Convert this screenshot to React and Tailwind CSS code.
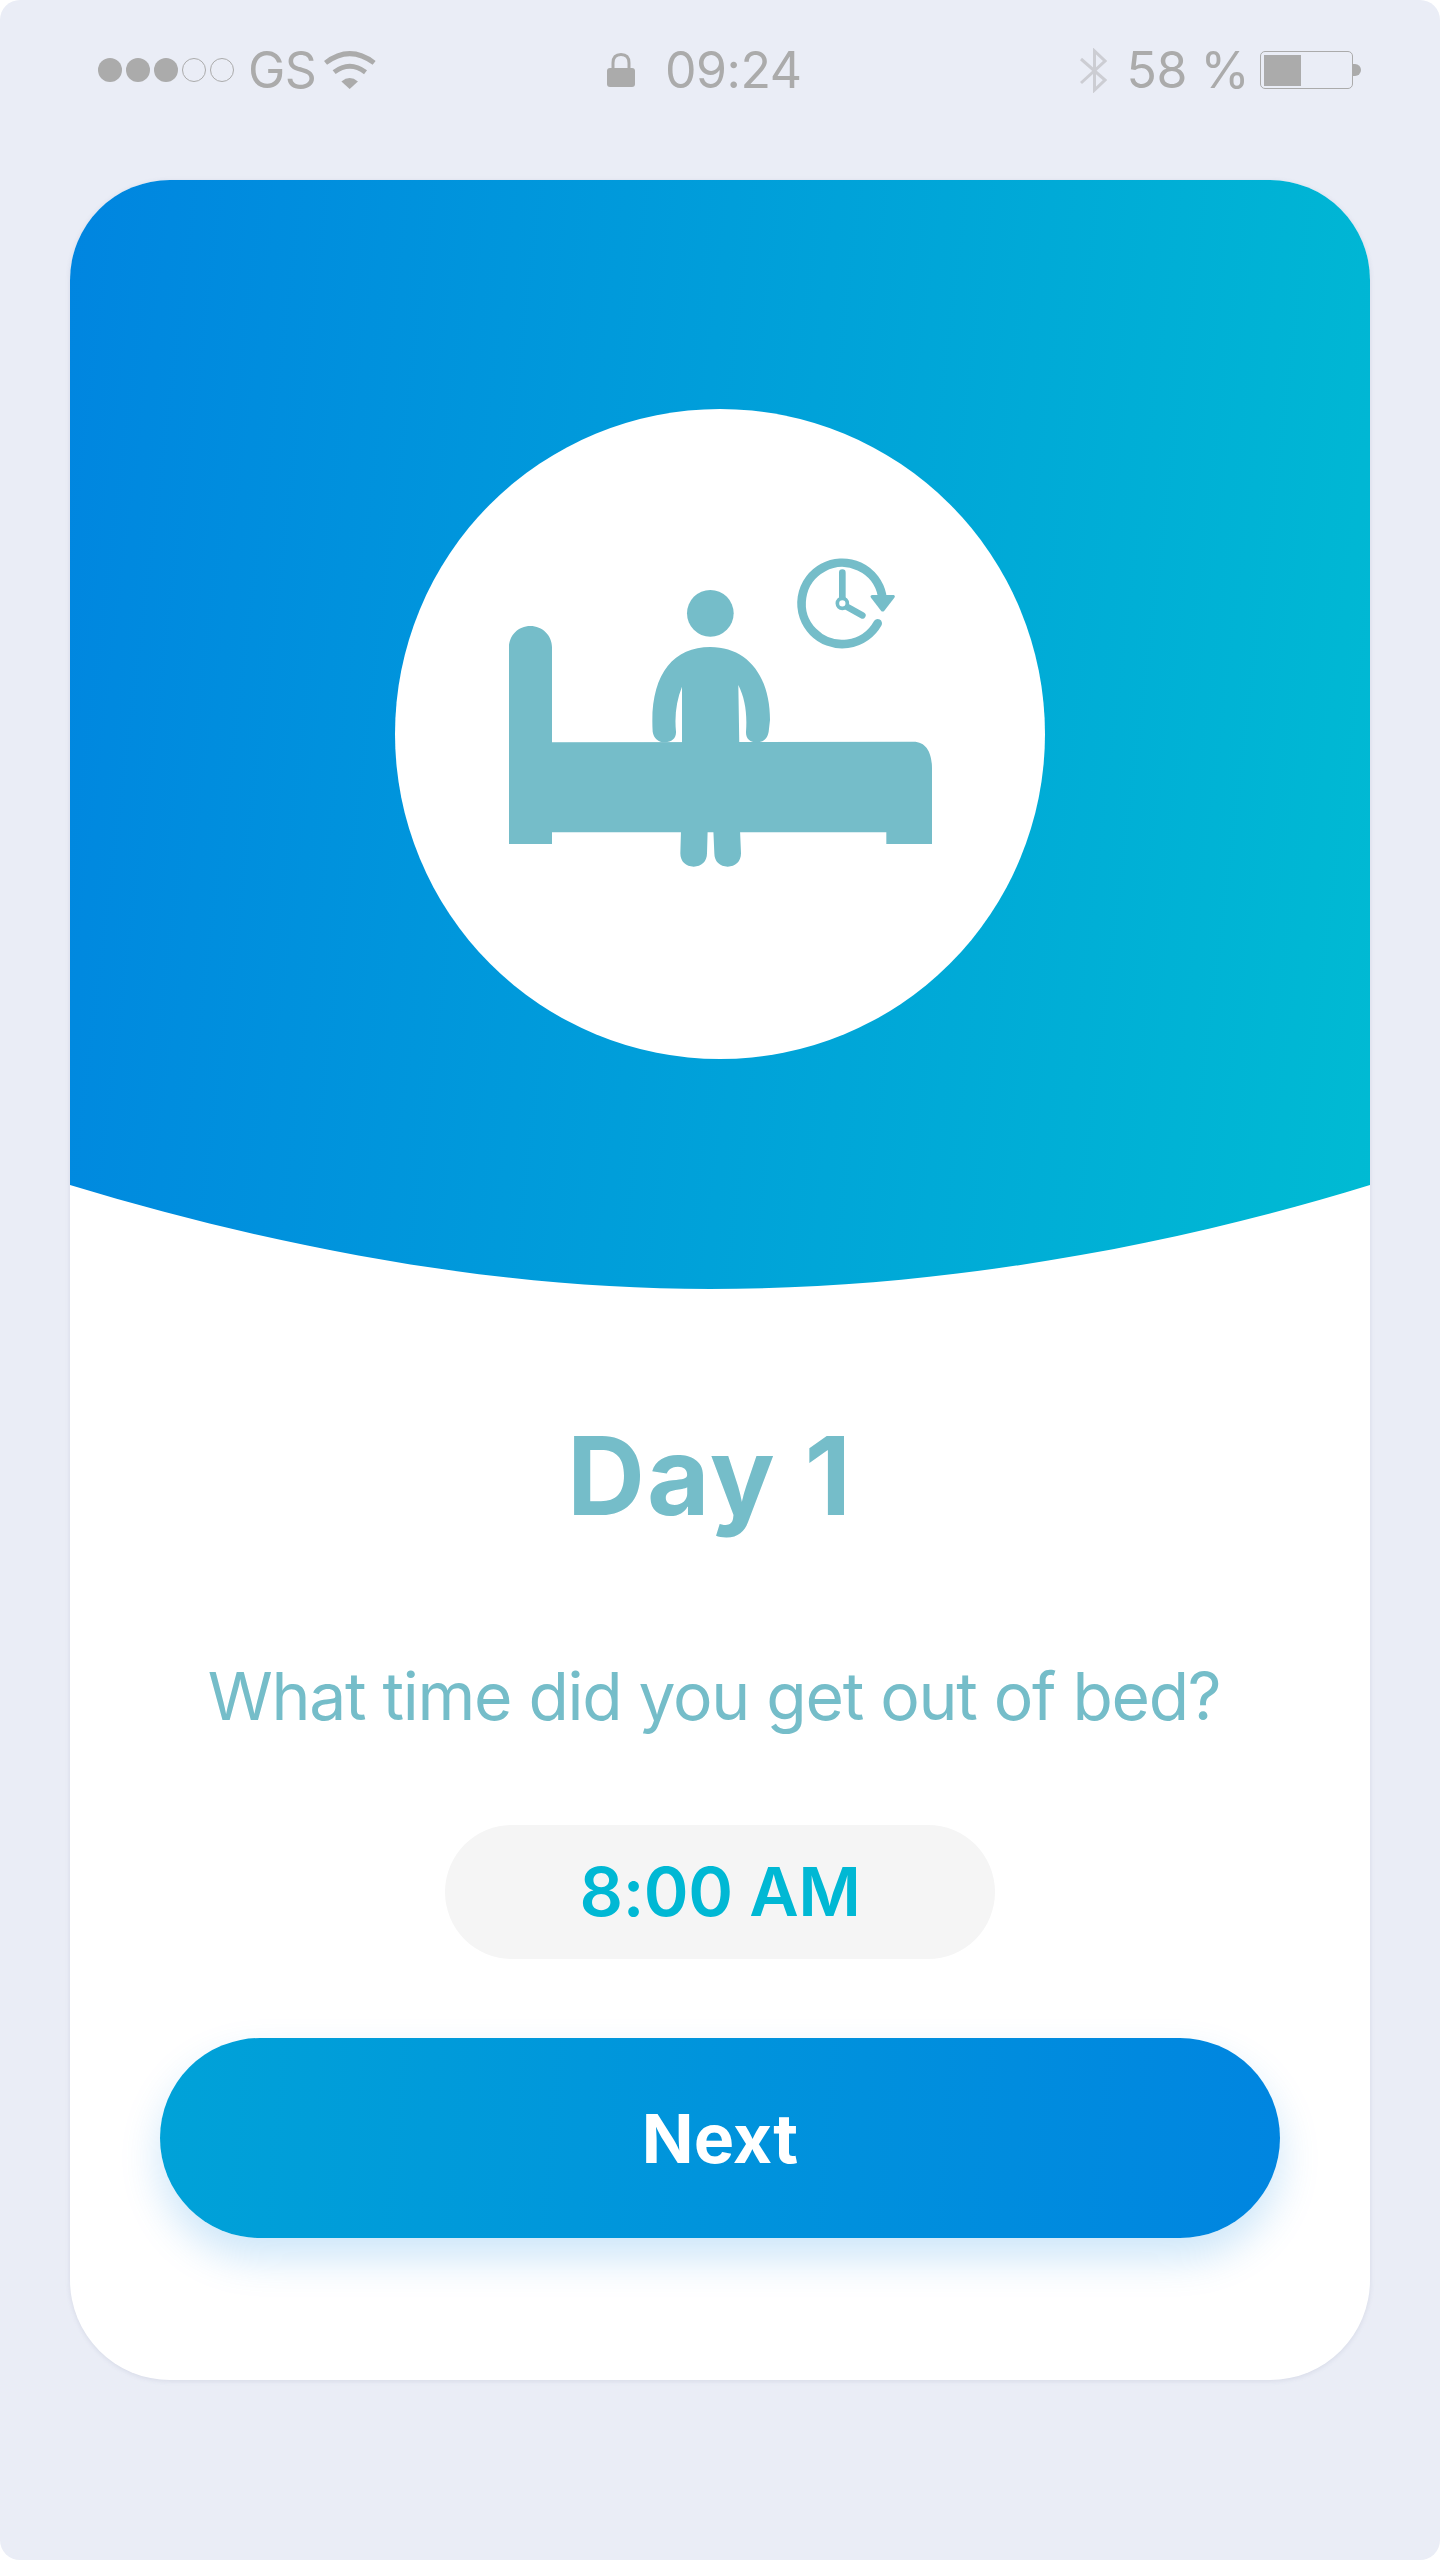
function SignalDots() {
  return (
    <div className="flex items-center gap-[4px]">
      <span className="h-[24px] w-[24px] rounded-full bg-[#ababab]" />
      <span className="h-[24px] w-[24px] rounded-full bg-[#ababab]" />
      <span className="h-[24px] w-[24px] rounded-full bg-[#ababab]" />
      <span className="h-[24px] w-[24px] rounded-full border-[1.5px] border-[#ababab]" />
      <span className="h-[24px] w-[24px] rounded-full border-[1.5px] border-[#ababab]" />
    </div>
  );
}

function WifiIcon() {
  return (
    <svg width="52" height="38" viewBox="0 0 156 115" className="ml-[8px] shrink-0" fill="none">
      <path d="M4 36 Q77 -20 151 36" stroke="#ababab" strokeWidth="15" />
      <path d="M30 64 Q77 28 125 64" stroke="#ababab" strokeWidth="15" />
      <path d="M52 92 Q77 72 102 92 L77 115 Z" fill="#ababab" />
    </svg>
  );
}

function LockIcon() {
  return (
    <svg width="28" height="34" viewBox="0 0 28 34" className="shrink-0" fill="none">
      <path d="M6 18 V10 C6 4 9.5 1.5 14 1.5 C18.5 1.5 22 4 22 10 V18" stroke="#ababab" strokeWidth="3" />
      <rect x="0" y="15" width="28" height="19" rx="3" fill="#ababab" />
    </svg>
  );
}

function BluetoothIcon() {
  return (
    <svg width="27" height="45" viewBox="0 0 27 45" className="shrink-0" fill="none">
      <path d="M1 11 L25 32 L14.5 42 V3 L25 13 L1 35" stroke="#cccdd3" strokeWidth="3" />
    </svg>
  );
}

function BatteryIcon() {
  return (
    <div className="ml-[11px] flex items-center">
      <div className="h-[38px] w-[93px] rounded-[5px] border-[1.5px] border-[#ababab] p-[2.5px]">
        <div className="h-full w-[37px] bg-[#ababab]" />
      </div>
      <div className="h-[12px] w-[8px] rounded-r-full bg-[#ababab]" />
    </div>
  );
}

function StatusBar() {
  const textClass = 'text-[50px] leading-[60px] font-normal tracking-[-0.5px] text-[#ababab]';
  return (
    <div className="flex h-[180px] items-start pt-[40px] pl-[98px] pr-[79px]">
      <div className="flex h-[60px] w-[509px] items-center">
        <SignalDots />
        <span className={`${textClass} ml-[14px]`}>GS</span>
        <WifiIcon />
      </div>
      <div className="flex h-[60px] items-center">
        <LockIcon />
        <span className={`${textClass} ml-[30px]`}>09:24</span>
      </div>
      <div className="ml-auto flex h-[60px] items-center">
        <BluetoothIcon />
        <span className={`${textClass} ml-[20px]`}>58 %</span>
        <BatteryIcon />
      </div>
    </div>
  );
}

function BedIcon() {
  return (
    <svg width="480" height="340" viewBox="0 0 1440 1020" className="mb-[28px] shrink-0" fill="#75bdc9">
      {/* bed */}
      <path d="M87 882 V292 C87 256 115 228 151 228 C187 228 216 256 216 292 V577 L1300 575 C1340 575 1356 610 1356 655 V882 H1219 V847 H216 V882 Z" />
      {/* person */}
      <circle cx="691" cy="190" r="70" />
      <path d="M691 291 C800 291 870 375 870 510 L866 545 C862 568 848 577 830 577 C810 577 797 565 798 545 C802 490 795 445 775 405 L778 590 H606 V410 C590 450 583 495 588 545 C589 565 575 577 555 577 C535 577 521 565 518 545 C508 380 575 291 691 291 Z" />
      <path d="M603 840 L601 910 C601 935 618 950 641 950 C664 950 681 935 681 910 L683 840 Z" />
      <path d="M700 840 L703 910 C703 935 720 950 743 950 C766 950 783 935 783 910 L780 840 Z" />
      {/* clock */}
      <path d="M1193 220 A122 122 0 1 1 1206 135" fill="none" stroke="#75bdc9" strokeWidth="26" strokeLinecap="round" />
      <path d="M1176 135 H1241 Q1247 137 1243 143 L1213 182 Q1208 187 1203 182 L1173 143 Q1169 137 1176 135 Z" />
      <path d="M1087 68 V145 M1100 170 L1147 196" fill="none" stroke="#75bdc9" strokeWidth="20" strokeLinecap="round" />
      <circle cx="1087" cy="160" r="15" fill="#ffffff" stroke="#75bdc9" strokeWidth="11" />
    </svg>
  );
}

function Header() {
  return (
    <div className="relative flex h-[1110px] justify-center bg-[linear-gradient(97deg,#0085e0_0%,#00bbd3_100%)] pt-[229px]">
      <div className="flex h-[650px] w-[650px] items-center justify-center rounded-full bg-white">
        <BedIcon />
      </div>
      <svg
        width="1300"
        height="106"
        viewBox="0 0 1300 106"
        className="absolute bottom-0 left-0 block"
        preserveAspectRatio="none"
      >
        <path d="M0 1 C215 66 430 105 640 105 C860 105 1090 66 1300 1 V106 H0 Z" fill="#ffffff" />
      </svg>
    </div>
  );
}

export default function App() {
  return (
    <div className="h-[2561px] bg-white [font-family:Inter,sans-serif]">
      <div className="h-[2560px] overflow-hidden rounded-[20px] bg-[#eaedf6]">
        <StatusBar />
        <div className="mx-auto h-[2200px] w-[1300px] overflow-hidden rounded-[100px] bg-white shadow-[0_1px_5px_rgba(90,100,140,0.14)]">
          <Header />
          <div className="flex flex-col items-center">
            <h1 className="mt-[121px] mr-[20px] text-[108px] leading-[130px] font-bold tracking-[2px] text-[#75bdc9]">Day 1</h1>
            <p className="mt-[115px] mr-[12px] text-[66px] leading-[80px] tracking-[-1.3px] text-[#75bdc9]">What time did you get out of bed?</p>
            <div className="mt-[89px] flex h-[134px] w-[550px] items-center justify-center rounded-full bg-[#f5f5f5] pb-[2px] text-[68px] font-semibold tracking-[-0.5px] text-[#00b8d4]">
              8:00 AM
            </div>
            <button
              type="button"
              className="mt-[79px] flex h-[200px] w-[1120px] items-center justify-center rounded-full bg-[linear-gradient(95deg,#00a2d8_0%,#0085e0_100%)] text-[68px] font-bold text-white shadow-[0_20px_40px_rgba(0,131,227,0.2)]"
            >
              Next
            </button>
          </div>
        </div>
      </div>
    </div>
  );
}
